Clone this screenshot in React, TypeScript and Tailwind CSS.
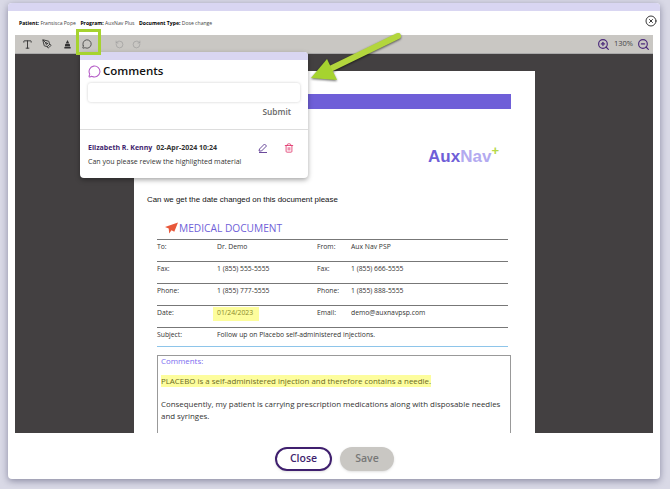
import React from 'react';
import { MessageCircle, PenTool, RotateCcw, RotateCw, Trash2, Type, XCircle, ZoomIn, ZoomOut } from 'lucide-react';

const rows = [
  { left: 'To:', leftValue: 'Dr. Demo', right: 'From:', rightValue: 'Aux Nav PSP' },
  { left: 'Fax:', leftValue: '1 (855) 555-5555', right: 'Fax:', rightValue: '1 (855) 666-5555' },
  { left: 'Phone:', leftValue: '1 (855) 777-5555', right: 'Phone:', rightValue: '1 (855) 888-5555' },
  { left: 'Date:', leftValue: '01/24/2023', right: 'Email:', rightValue: 'demo@auxnavpsp.com' },
];

const ui = { fontFamily: '"Open Sans", sans-serif' };
const arial = { fontFamily: '"Liberation Sans", sans-serif' };

const App: React.FC = () => {
  return (
    <div className="relative w-[670px] h-[489px] overflow-hidden bg-[#d9d9e6] pt-[3px] pl-[8px]" style={ui}>
      <div className="w-[652px] h-[476px] bg-white rounded-[4px] overflow-hidden flex flex-col shadow-[0_2px_7px_rgba(20,20,60,0.4)]">
        <div className="h-[8px] bg-[#d9d6f2]" />

        {/* Header */}
        <div className="h-[24px] flex items-center justify-between pl-[11px] pr-[3px] text-[5.100px] text-[#444]">
          <div className="flex gap-[4.500px] pt-[1px]">
            <span><b className="text-black">Patient:</b> Fransisca Pope</span>
            <span><b className="text-black">Program:</b> AuxNav Plus</span>
            <span><b className="text-black">Document Type:</b> Dose change</span>
          </div>
          <XCircle className="w-[12px] h-[12px] text-[#222] mt-[-4px]" strokeWidth={1.8} />
        </div>

        {/* Viewer */}
        <div className="mx-[7px] flex-1 flex flex-col min-h-0">
          <div className="h-[19px] shrink-0 bg-[#c9c7c3] flex items-center pl-[7px] pr-[3.500px] border-b border-[#aaa]">
            <Type className="w-[11px] h-[11px] text-[#333]" strokeWidth={2} />
            <PenTool className="w-[10px] h-[10px] text-[#333] ml-[9px]" strokeWidth={2.2} />
            <svg viewBox="0 0 10 10" className="w-[9px] h-[10px] ml-[11px] text-[#333]">
              <path d="M5 0.500 7 4.500H3Z M2.500 5h5L8 7.800H2Z M1.500 8.400h7V10h-7Z" fill="currentColor" />
            </svg>
            <MessageCircle className="w-[10px] h-[10px] text-[#333] ml-[10px]" strokeWidth={1.8} />
            <RotateCcw className="w-[9px] h-[9px] text-[#999] ml-[23px]" strokeWidth={1.6} />
            <RotateCw className="w-[9px] h-[9px] text-[#999] ml-[8px]" strokeWidth={1.6} />
            <div className="ml-auto flex items-center text-[7.500px] text-[#444]">
              <ZoomIn className="w-[13px] h-[13px] text-[#4b2a7b]" strokeWidth={2.2} />
              <span className="mx-[3.500px]">130%</span>
              <ZoomOut className="w-[13px] h-[13px] text-[#4b2a7b]" strokeWidth={2.2} />
            </div>
          </div>

          <div className="flex-1 min-h-0 bg-[#434041] overflow-hidden pt-[17px] pl-[119px]">
            <div className="w-[401px] h-[400px] bg-white pt-[23px] pl-[13px] pr-[24px]">
              <div className="h-[15px] ml-[10px] bg-[#6f5fd8]" />
              <div className="flex justify-end items-start mt-[36px] pr-[12px] h-[28px]" style={arial}>
                <span className="text-[17px] leading-[24px] font-bold text-[#6f5fd8]">Aux</span>
                <span className="text-[17px] leading-[24px] font-bold text-[#b3aaf0]">Nav</span>
                <span className="text-[13px] leading-[14px] font-bold text-[#b5d84a] mt-[-1px]">+</span>
              </div>
              <p className="mt-[21px] text-[7.900px] leading-[12px] text-[#111]" style={arial}>
                Can we get the date changed on this document please
              </p>

              <div className="ml-[10px] mt-[14px] flex items-center h-[16px]">
                <svg viewBox="0 0 14 12" className="w-[13px] h-[12px] ml-[8px] mr-[1px]">
                  <path d="M14 0 0 5l4 1.500L4.500 12l2.500-3.500 3 1.500Z" fill="#e8583a" />
                </svg>
                <span className="text-[10.200px] text-[#6f5fd8] leading-none">MEDICAL DOCUMENT</span>
              </div>

              <div className="ml-[10px] mr-[3px] text-[6.800px] text-[#333] mt-[3px]">
                {rows.map((row) => (
                  <div key={row.left} className="h-[21.900px] border-t border-[#777] flex pt-[2px]">
                    <span className="w-[60px]">{row.left}</span>
                    <span className={`w-[100px] ${row.left === 'Date:' ? 'text-[#8a8a2a]' : ''}`}>
                      {row.left === 'Date:' ? (
                        <span className="bg-[#fdfd9d] pl-[4px] pr-[6px] pb-[4px] pt-[1px] ml-[-4px]">{row.leftValue}</span>
                      ) : (
                        row.leftValue
                      )}
                    </span>
                    <span className="w-[34px]">{row.right}</span>
                    <span>{row.rightValue}</span>
                  </div>
                ))}
                <div className="h-[19.500px] border-t border-[#777] flex pt-[2px]">
                  <span className="w-[60px]">Subject:</span>
                  <span>Follow up on Placebo self-administered injections.</span>
                </div>
                <div className="border-t border-[#8ec5ea]" />
              </div>

              <div className="ml-[10px] mt-[8px] h-[120px] border border-[#999] pl-[3px] text-[7.900px] leading-[11.500px] text-[#333]">
                <p className="text-[#7b6cf0]">Comments:</p>
                <p className="mt-[8px]"><span className="bg-[#fdfd9d] text-[#6b6b24] py-[1px]">PLACEBO is a self-administered injection and therefore contains a needle.</span></p>
                <p className="mt-[12px]">Consequently, my patient is carrying prescription medications along with disposable needles and syringes.</p>
              </div>
            </div>
          </div>
        </div>

        {/* Footer */}
        <div className="h-[46px] shrink-0 flex items-center justify-center gap-[8px] pt-[6px] pl-[1px]">
          <button className="w-[57px] h-[24px] rounded-full border-2 border-[#3f1f6e] text-[10.500px] font-semibold text-[#3f1f6e] shadow">Close</button>
          <button className="w-[54px] h-[24px] rounded-full bg-[#c9c7c3] text-[10.500px] font-semibold text-[#777] shadow">Save</button>
        </div>
      </div>

      {/* Comments popover */}
      <div className="absolute left-[80px] top-[52px] w-[228px] h-[126px] bg-white rounded-[4px] overflow-hidden shadow-[0_2px_5px_rgba(0,0,0,0.35)]">
        <div className="h-[8px] bg-[#d9d6f2]" />
        <div className="flex items-center gap-[2px] pl-[8px] mt-[4px] h-[14px]">
          <MessageCircle className="w-[13px] h-[13px] text-[#b65fc8]" strokeWidth={2} />
          <span className="text-[11.500px] font-semibold text-[#111]">Comments</span>
        </div>
        <div className="mx-[8px] mt-[5px] h-[19px] rounded-[3px] bg-white shadow-[0_0_3px_rgba(0,0,0,0.2)]" />
        <div className="flex justify-end pr-[17px] mt-[2px] text-[8.300px] font-semibold text-[#666] leading-[16px]">Submit</div>
        <div className="mt-[9px] border-t border-[#ddd] pt-[12px] pl-[8px] pr-[14px]">
          <div className="flex items-center h-[12px]">
            <span className="text-[7px] font-bold text-[#3f1f6e]">Elizabeth R. Kenny</span>
            <span className="text-[7px] font-bold text-[#333] ml-[4px]">02-Apr-2024 10:24</span>
            <svg viewBox="0 0 10 10" className="w-[10px] h-[10px] ml-auto text-[#6b4a9b]" fill="none" stroke="currentColor" strokeWidth="1">
              <path d="M1 8 1.500 6 6.500 1 8.500 3 3.500 8Z M1 9.500h8" />
            </svg>
            <Trash2 className="w-[10px] h-[10px] text-[#e0356b] ml-[16px]" strokeWidth={2} />
          </div>
          <p className="mt-[1.500px] text-[7.050px] leading-[11px] text-[#333]">Can you please review the highlighted material</p>
        </div>
      </div>

      {/* Annotation: highlight box and arrow */}
      <div className="absolute left-[76px] top-[29px] w-[25px] h-[26px] border-[3px] border-[#a6d32f]" />
      <svg className="absolute left-[300px] top-[25px] w-[110px] h-[65px] drop-shadow-[0_1px_1px_rgba(0,0,0,0.6)]" viewBox="0 0 110 65">
        <path d="M98 11 28 45" stroke="#b3d63d" strokeWidth="6" strokeLinecap="round" />
        <path d="M11 53 27 34 37 55Z" fill="#a6d32f" />
      </svg>
    </div>
  );
};

export default App;
